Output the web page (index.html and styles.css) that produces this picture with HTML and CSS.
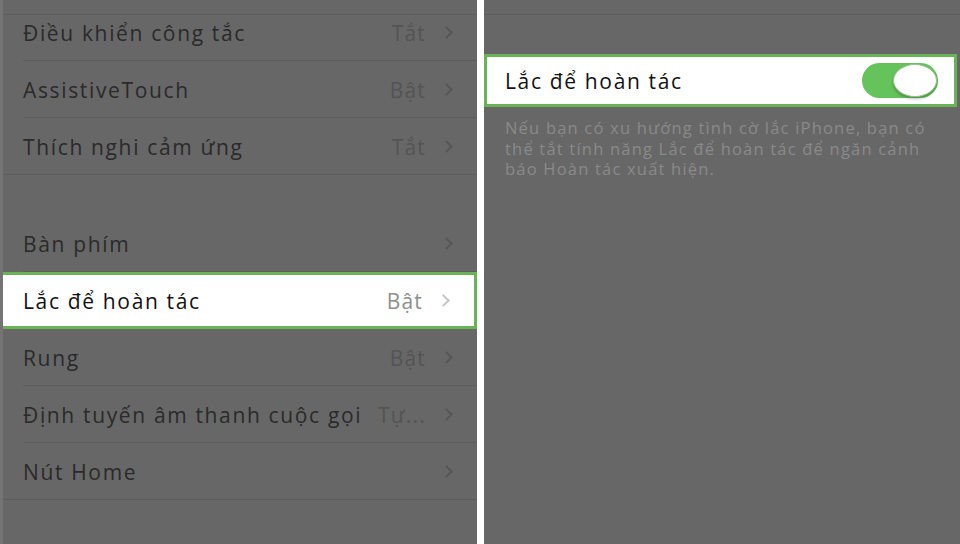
FILE: index.html
```html
<!DOCTYPE html>
<html lang="vi">
<head>
<meta charset="utf-8">
<title>Trợ năng</title>
<link rel="stylesheet" href="styles.css">
</head>
<body>
<div class="screens">
  <section class="panel panel-left">
    <div class="peek"></div>
    <ul class="group">
      <li class="row"><span class="label">Điều khiển công tắc</span><span class="value">Tắt</span><span class="chev"></span></li>
      <li class="row"><span class="label">AssistiveTouch</span><span class="value">Bật</span><span class="chev"></span></li>
      <li class="row row-last"><span class="label">Thích nghi cảm ứng</span><span class="value">Tắt</span><span class="chev"></span></li>
    </ul>
    <div class="spacer"></div>
    <ul class="group">
      <li class="row"><span class="label">Bàn phím</span><span class="chev"></span></li>
      <li class="row row-active"><span class="label">Lắc để hoàn tác</span><span class="value">Bật</span><span class="chev"></span></li>
      <li class="row"><span class="label">Rung</span><span class="value">Bật</span><span class="chev"></span></li>
      <li class="row"><span class="label">Định tuyến âm thanh cuộc gọi</span><span class="value">Tự...</span><span class="chev"></span></li>
      <li class="row row-last"><span class="label">Nút Home</span><span class="chev"></span></li>
    </ul>
  </section>
  <div class="divider"></div>
  <section class="panel panel-right">
    <div class="navbar"></div>
    <div class="toggle-row">
      <span class="label">Lắc để hoàn tác</span>
      <span class="switch on"><span class="knob"></span></span>
    </div>
    <p class="footnote">Nếu bạn có xu hướng tình cờ lắc iPhone, bạn có thể tắt tính năng Lắc để hoàn tác để ngăn cảnh báo Hoàn tác xuất hiện.</p>
  </section>
</div>
</body>
</html>
```

FILE: styles.css
```css
* { box-sizing: border-box; }

html, body {
  margin: 0;
  padding: 0;
  width: 960px;
  height: 544px;
  overflow: hidden;
  background: #ffffff;
  font-family: "Open Sans", "Noto Sans", sans-serif;
}

.screens {
  display: flex;
  height: 544px;
}

.panel {
  background: #676767;
  overflow: hidden;
  height: 100%;
}

.panel-left {
  width: 477px;
  border-left: 3px solid #747474;
  background-color: #676767;
  background-image: linear-gradient(to bottom, transparent 14px, #5d5d5d 14px, #5d5d5d 15px, transparent 15px);
}

.divider {
  width: 7px;
  background: #ffffff;
}

.panel-right {
  flex: 1;
}

/* top of the list, scrolled under the nav bar */
.peek {
  height: 4px;
}

ul.group {
  list-style: none;
  margin: 0;
  padding: 0;
}

.row {
  display: flex;
  align-items: center;
  height: 57px;
  padding: 0 22px 0 20px;
  font-size: 21px;
  color: #2a2a2a;
  background-image: linear-gradient(#5d5d5d, #5d5d5d);
  background-size: calc(100% - 20px) 1px;
  background-position: right bottom;
  background-repeat: no-repeat;
}

.row-last {
  background-size: 100% 1px;
}

.row .label {
  flex: 1;
  white-space: nowrap;
  letter-spacing: 1.65px;
}

.row .value {
  color: #545454;
  margin-right: 16px;
  letter-spacing: 1.2px;
}

.chev {
  width: 9px;
  height: 9px;
  border-top: 2px solid #565656;
  border-right: 2px solid #565656;
  transform: rotate(45deg);
  margin-right: 4px;
}

.spacer {
  height: 40px;
}

.row-active {
  background: #ffffff;
  border: 3px solid #69b357;
  margin-left: -3px;
  padding-left: 20px;
  color: #111111;
  height: 57px;
}

.row-active .value { color: #8e8e8e; }
.row-active .chev { border-color: #c5c5c9; }

/* right screen */
.navbar {
  height: 15px;
  border-bottom: 1px solid #5d5d5d;
  margin-bottom: 39px;
}

.toggle-row {
  display: flex;
  align-items: center;
  width: 473px;
  height: 53px;
  background: #ffffff;
  border: 3px solid #69b357;
  padding: 0 16px 0 18px;
  font-size: 21px;
  color: #111111;
}

.toggle-row .label {
  flex: 1;
  letter-spacing: 1.65px;
}

.switch {
  position: relative;
  width: 76px;
  height: 35px;
  border-radius: 18px;
  background: #64c35a;
}

.switch .knob {
  position: absolute;
  right: 1px;
  top: 1px;
  width: 44px;
  height: 33px;
  border-radius: 50%;
  background: #ffffff;
  border: 1px solid #9bbd92;
  box-shadow: 0 2px 3px rgba(0, 0, 0, 0.25);
}

.footnote {
  margin: 11px 0 0 0;
  padding: 0 21px 0 21px;
  font-size: 16.5px;
  line-height: 20.5px;
  color: #8a8a8a;
  letter-spacing: 1.2px;
}
```
